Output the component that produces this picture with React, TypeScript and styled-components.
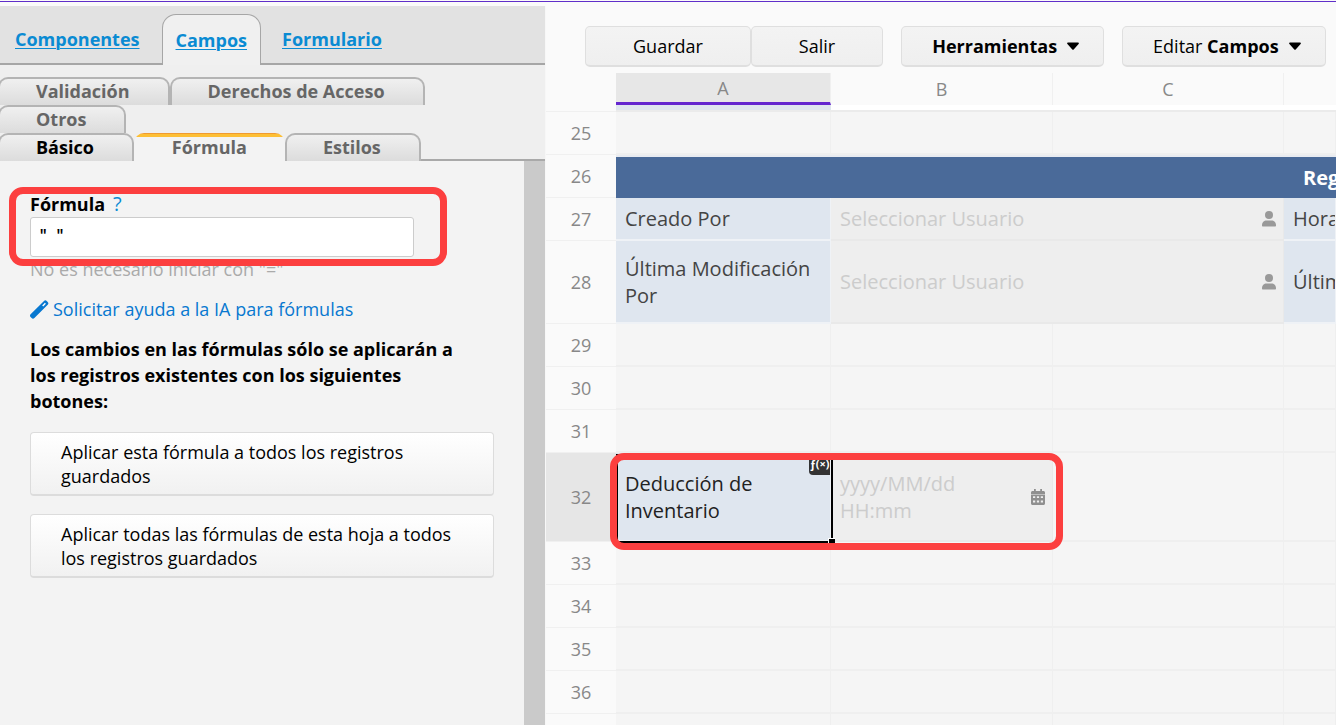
import React from 'react';
import styled, { createGlobalStyle, css } from 'styled-components';

const GlobalStyle = createGlobalStyle`
  *, *::before, *::after { box-sizing: border-box; }
  body {
    margin: 0;
    background: #fafafa;
    font-family: 'Open Sans', 'Noto Sans', sans-serif;
    font-size: 18px;
    line-height: 24px;
    color: #000;
  }
  button, textarea { font: inherit; color: inherit; }
`;

const Page = styled.div`
  display: flex;
  flex-direction: column;
  height: 100vh;
  min-height: 480px;
  overflow: hidden;
`;

const TopLine = styled.header`
  flex: none;
  margin-top: 1px;
  height: 5px;
  border-top: 1px solid #5f2ec9;
`;

const Workspace = styled.div`
  display: flex;
  flex: 1;
  min-height: 0;
`;

/* ---------- Side panel ---------- */

const SidePanel = styled.aside`
  flex: none;
  display: flex;
  flex-direction: column;
  width: 546px;
  background: #f3f3f3;
  border-right: 1px solid #f7f7f7;
`;

const MainTabs = styled.nav`
  display: flex;
  align-items: flex-end;
  height: 59px;
  padding-left: 2px;
  background: #e2e2e2;
  box-shadow: inset 0 -2px #a6a6a6;
`;

const MainTab = styled.a<{ $active?: boolean }>`
  height: ${({ $active }) => ($active ? 51 : 49)}px;
  padding: ${({ $active }) => ($active ? '13px 13px 0' : '10px 12px 0')};
  margin: ${({ $active }) => ($active ? '0 8px 0 9px' : '0')};
  border: 1px solid transparent;
  border-bottom: 0;
  font-weight: 700;
  color: #0a8bd3;
  text-decoration: underline;
  text-underline-offset: 2px;
  text-decoration-thickness: 1px;
  ${({ $active }) =>
    $active &&
    css`
      border-color: #a6a6a6;
      border-radius: 14px 14px 0 0;
      background: #f0f0f0;
    `}
`;

const SubTabs = styled.div`
  padding-top: 12px;
  background: #efefef;
`;

const SubTabRow = styled.div<{ $last?: boolean }>`
  display: flex;
  height: 28px;
  margin-left: -2px;
  ${({ $last }) => $last && 'box-shadow: inset 0 -2px #a9a9a9;'}
`;

const SubTab = styled.button<{ $active?: boolean; $strong?: boolean }>`
  padding: 0 38px 2px 36px;
  border: 2px solid #b4b4b4;
  border-bottom: 0;
  border-radius: 10px 10px 0 0;
  background: linear-gradient(#f0f0f0, #dcdcdc);
  font-weight: 700;
  line-height: 24px;
  color: ${({ $strong }) => ($strong ? '#000' : '#666')};
  ${({ $active }) =>
    $active &&
    css`
      padding: 0 38px;
      border: 0;
      background: linear-gradient(#f09a30 0 1px, #fdbf35 1px 4px, #f3f3f3 4px);
    `}
`;

const PanelBody = styled.div`
  flex: 1;
  display: flex;
  min-height: 0;
`;

const PanelContent = styled.div`
  flex: 1;
  min-width: 0;
  padding: 31px 30px 0;
`;

const ScrollTrack = styled.div`
  flex: none;
  width: 21px;
  background: #cacaca;
`;

const Callout = styled.span`
  position: absolute;
  z-index: 2;
  border: 7px solid #fc3f3f;
  border-radius: 14px;
  pointer-events: none;
`;

const Field = styled.div`
  position: relative;
  width: 384px;
`;

const FieldCallout = styled(Callout)`
  inset: -5px -33px -9px -21px;
`;

const FieldHead = styled.div`
  display: flex;
  gap: 8px;
  align-items: center;
  margin-bottom: 1px;
`;

const FieldLabel = styled.label`
  font-weight: 700;
`;

const HelpLink = styled.a`
  font-size: 20px;
  color: #0a8bd3;
  text-decoration: none;
`;

const FormulaInput = styled.textarea`
  display: block;
  width: 100%;
  height: 40px;
  padding: 8px;
  border: 1px solid #ccc;
  border-radius: 3px;
  background: #fff;
  font-family: 'Liberation Mono', monospace;
  font-size: 14px;
  font-weight: 700;
  line-height: 20px;
  resize: none;
  overflow: hidden;
`;

const Hint = styled.p`
  margin: 0;
  color: #aaa;
`;

const AiLink = styled.a`
  display: flex;
  align-items: center;
  gap: 4px;
  margin-top: 16px;
  color: #0878d0;
  text-decoration: none;
`;

const Notice = styled.p`
  max-width: 450px;
  margin: 15px 0 18px;
  font-weight: 700;
  line-height: 26px;
`;

const ApplyButton = styled.button`
  display: block;
  width: 100%;
  margin-bottom: 18px;
  padding: 7px 30px 6px;
  border: 1px solid #dcdcdc;
  border-bottom-width: 2px;
  border-radius: 4px;
  background: linear-gradient(#fff, #f1f1f1);
  text-align: left;
`;

/* ---------- Sheet ---------- */

const Sheet = styled.main`
  flex: 1;
  min-width: 0;
  overflow: hidden;
  background: #fafafa;
`;

const Toolbar = styled.div`
  display: flex;
  align-items: flex-start;
  gap: 18px;
  padding: 20px 0 6px 39px;
`;

const ButtonGroup = styled.div`
  display: flex;
`;

const ToolButton = styled.button<{ $wide?: boolean }>`
  display: flex;
  align-items: center;
  gap: 10px;
  height: 41px;
  padding: ${({ $wide }) => ($wide ? '0 47px' : '0 24px 0 30px')};
  border: 1px solid #dfdfdf;
  border-bottom-width: 2px;
  border-radius: 5px;
  background: linear-gradient(#f3f3f3, #efefef);
  white-space: pre;
`;

const Grid = styled.table`
  width: 100%;
  table-layout: fixed;
  border-collapse: separate;
  border-spacing: 0;
`;

const ColumnHead = styled.th<{ $selected?: boolean }>`
  height: 32px;
  padding: 0;
  border-right: 1px solid #f0f0f0;
  font-weight: 400;
  color: #888;
  ${({ $selected }) =>
    $selected &&
    css`
      background: #e7e7e7;
      border-bottom: 3px solid #6426cf;
    `}
`;

const RowHead = styled.th<{ $selected?: boolean }>`
  padding: 0;
  border-bottom: 1px solid #f0f0f0;
  font-weight: 400;
  color: #888;
  background: ${({ $selected }) => ($selected ? '#e6e6e6' : '#fafafa')};
`;

const Row = styled.tr<{ $height: number }>`
  height: ${({ $height }) => $height}px;
`;

type Tone = 'plain' | 'label' | 'input' | 'white';
const toneColor: Record<Tone, string> = {
  plain: '#f5f5f5',
  label: '#dfe6ef',
  input: '#eeeeee',
  white: '#ffffff',
};

const Cell = styled.td<{ $tone: Tone; $selected?: boolean }>`
  position: relative;
  padding: 0 9px;
  border-right: 1px solid #efefef;
  border-bottom: 2px solid #efefef;
  background: ${({ $tone }) => toneColor[$tone]};
  font-size: 20px;
  line-height: 27px;
  white-space: nowrap;
  color: ${({ $tone }) => ($tone === 'input' ? '#ccc' : '#444')};
  ${({ $tone }) => $tone === 'input' && 'border-color: #e9e9e9;'}
  ${({ $tone }) => $tone === 'label' && 'border-color: #eff2f6;'}
  ${({ $selected }) => $selected && 'color: #222;'}
`;

const SliverCell = styled(Cell)`
  height: 7px;
  line-height: 0;
  border-right: 0;
  border-bottom: 2px solid #ebebeb;
`;

const TitleCell = styled.th`
  padding: 0 19px;
  border-top: 2px solid #e8ebf1;
  background: #4a6a99;
  background-clip: padding-box;
  color: #fff;
  font-size: 20px;
  font-weight: 700;
  text-align: left;
  white-space: nowrap;
  overflow: hidden;
`;

const ClippedCell = styled(Cell)`
  overflow: hidden;
`;

const CellField = styled.div`
  display: flex;
  align-items: center;
  justify-content: space-between;
  padding-right: 4px;
  margin-right: -6px;
  svg { flex: none; }
`;

const CellCallout = styled(Callout)`
  top: 0;
  bottom: -10px;
  left: -6px;
  width: 453px;
`;

const SelectionFrame = styled.span`
  position: absolute;
  z-index: 1;
  inset: 1px -3px -3px 0;
  border: 2px solid #000;
  pointer-events: none;
`;

const FxBadge = styled.span`
  position: absolute;
  top: 2px;
  right: 0;
  width: 21px;
  height: 20px;
  border-radius: 0 0 0 4px;
  background: #333;
  color: #fff;
  font-size: 11px;
  font-weight: 700;
  line-height: 18px;
  text-align: center;
`;

const FillHandle = styled.span`
  position: absolute;
  right: -4px;
  bottom: -3px;
  width: 7px;
  height: 6px;
  border: solid #fff;
  border-width: 1px 0 0 1px;
  background: #000;
`;

const Caret = () => (
  <svg width="12" height="8" viewBox="0 0 12 8" aria-hidden="true">
    <path d="M1 .5h10c.9 0 1.2.9.6 1.5L6.900 7.300a1.200 1.200 0 0 1-1.800 0L.4 2C-.2 1.400.1.5 1 .5z" />
  </svg>
);

const PenIcon = () => (
  <svg width="19" height="19" viewBox="0 0 19 19" aria-hidden="true">
    <path d="M.6 14.300 14 1a1.900 1.900 0 0 1 2.700 0l1 1a1.900 1.900 0 0 1 0 2.700L4.400 18a2 2 0 0 1-2.800 0l-1-1a2 2 0 0 1 0-2.700z" fill="#0878d0" />
    <path d="m12.200 5.500 2.700-2.700 1 1-2.700 2.700z" fill="#fff" />
  </svg>
);

const UserIcon = () => (
  <svg width="14" height="16" viewBox="0 0 14 16" fill="#999" aria-hidden="true">
    <circle cx="7" cy="4" r="4" />
    <path d="M0 14.500C0 11 2 9.500 4.500 9.500h5c2.500 0 4.500 1.500 4.500 5 0 .6-.4 1-1 1H1c-.6 0-1-.4-1-1z" />
  </svg>
);

const CalendarIcon = () => (
  <svg width="14" height="16" viewBox="0 0 14 16" aria-hidden="true">
    <path d="M3 0h1.800v2h4.400V0H11v2h1.500c.8 0 1.500.7 1.500 1.500V5H0V3.500C0 2.700.7 2 1.500 2H3z" fill="#8f8f8f" />
    <path d="M0 5.600h14v8.900c0 .8-.7 1.500-1.500 1.500h-11C.7 16 0 15.300 0 14.500z" fill="#8f8f8f" />
    <path d="M2 7.200h2.200v1.900H2zm3.900 0h2.200v1.900H5.900zm3.900 0H12v1.900H9.800zM2 11.500h2.200v1.900H2zm3.900 0h2.200v1.900H5.900zm3.900 0H12v1.900H9.800z" fill="#eee" />
  </svg>
);

const EmptyRow = ({ n }: { n: number }) => (
  <Row $height={43}>
    <RowHead scope="row">{n}</RowHead>
    <Cell $tone="plain" />
    <Cell $tone="plain" />
    <Cell $tone="plain" />
    <Cell $tone="plain" />
  </Row>
);

const UserRow = ({ n, height, label, next }: { n: number; height: number; label: React.ReactNode; next: string }) => (
  <Row $height={height}>
    <RowHead scope="row">{n}</RowHead>
    <Cell $tone="label">{label}</Cell>
    <Cell $tone="input" colSpan={2}>
      <CellField>
        Seleccionar Usuario
        <UserIcon />
      </CellField>
    </Cell>
    <ClippedCell $tone="label">{next}</ClippedCell>
  </Row>
);

export default function App() {
  return (
    <Page>
      <GlobalStyle />
      <TopLine />
      <Workspace>
        <SidePanel>
          <MainTabs>
            <MainTab href="#componentes">Componentes</MainTab>
            <MainTab href="#campos" $active>Campos</MainTab>
            <MainTab href="#formulario">Formulario</MainTab>
          </MainTabs>
          <SubTabs>
            <SubTabRow>
              <SubTab>Validación</SubTab>
              <SubTab>Derechos de Acceso</SubTab>
            </SubTabRow>
            <SubTabRow>
              <SubTab>Otros</SubTab>
            </SubTabRow>
            <SubTabRow $last>
              <SubTab $strong>Básico</SubTab>
              <SubTab $active>Fórmula</SubTab>
              <SubTab>Estilos</SubTab>
            </SubTabRow>
          </SubTabs>
          <PanelBody>
            <PanelContent>
              <Field>
                <FieldHead>
                  <FieldLabel htmlFor="formula">Fórmula</FieldLabel>
                  <HelpLink href="#ayuda">?</HelpLink>
                </FieldHead>
                <FormulaInput id="formula" defaultValue={'" "'} spellCheck={false} />
                <FieldCallout />
              </Field>
              <Hint>No es necesario iniciar con "="</Hint>
              <AiLink href="#ia">
                <PenIcon />
                Solicitar ayuda a la IA para fórmulas
              </AiLink>
              <Notice>
                Los cambios en las fórmulas sólo se aplicarán a los registros existentes con los siguientes botones:
              </Notice>
              <ApplyButton>Aplicar esta fórmula a todos los registros guardados</ApplyButton>
              <ApplyButton>Aplicar todas las fórmulas de esta hoja a todos los registros guardados</ApplyButton>
            </PanelContent>
            <ScrollTrack />
          </PanelBody>
        </SidePanel>
        <Sheet>
          <Toolbar>
            <ButtonGroup>
              <ToolButton $wide>Guardar</ToolButton>
              <ToolButton $wide>Salir</ToolButton>
            </ButtonGroup>
            <ToolButton>
              <b>Herramientas</b>
              <Caret />
            </ToolButton>
            <ToolButton>
              <span>Editar <b>Campos</b></span>
              <Caret />
            </ToolButton>
          </Toolbar>
          <Grid>
            <colgroup>
              <col style={{ width: 70 }} />
              <col style={{ width: 215 }} />
              <col style={{ width: 222 }} />
              <col style={{ width: 231 }} />
              <col />
            </colgroup>
            <thead>
              <tr>
                <td />
                <ColumnHead scope="col" $selected>A</ColumnHead>
                <ColumnHead scope="col">B</ColumnHead>
                <ColumnHead scope="col">C</ColumnHead>
                <td />
              </tr>
            </thead>
            <tbody>
              <tr>
                <RowHead />
                <SliverCell $tone="label" />
                <SliverCell $tone="white" />
                <SliverCell $tone="white" />
                <SliverCell $tone="white" />
              </tr>
              <EmptyRow n={25} />
              <Row $height={43}>
                <RowHead scope="row">26</RowHead>
                <TitleCell colSpan={3} />
                <TitleCell>Reg</TitleCell>
              </Row>
              <UserRow n={27} height={43} label="Creado Por" next="Hora" />
              <UserRow n={28} height={83} label={<>Última Modificación<br />Por</>} next="Últim" />
              <EmptyRow n={29} />
              <EmptyRow n={30} />
              <EmptyRow n={31} />
              <Row $height={89}>
                <RowHead scope="row" $selected>32</RowHead>
                <Cell $tone="label" $selected>
                  Deducción de<br />Inventario
                  <FxBadge>ƒ(×)</FxBadge>
                  <SelectionFrame>
                    <FillHandle />
                  </SelectionFrame>
                  <CellCallout />
                </Cell>
                <Cell $tone="input">
                  <CellField>
                    <span>yyyy/MM/dd<br />HH:mm</span>
                    <CalendarIcon />
                  </CellField>
                </Cell>
                <Cell $tone="plain" />
                <Cell $tone="plain" />
              </Row>
              <EmptyRow n={33} />
              <EmptyRow n={34} />
              <EmptyRow n={35} />
              <EmptyRow n={36} />
              <EmptyRow n={37} />
            </tbody>
          </Grid>
        </Sheet>
      </Workspace>
    </Page>
  );
}
